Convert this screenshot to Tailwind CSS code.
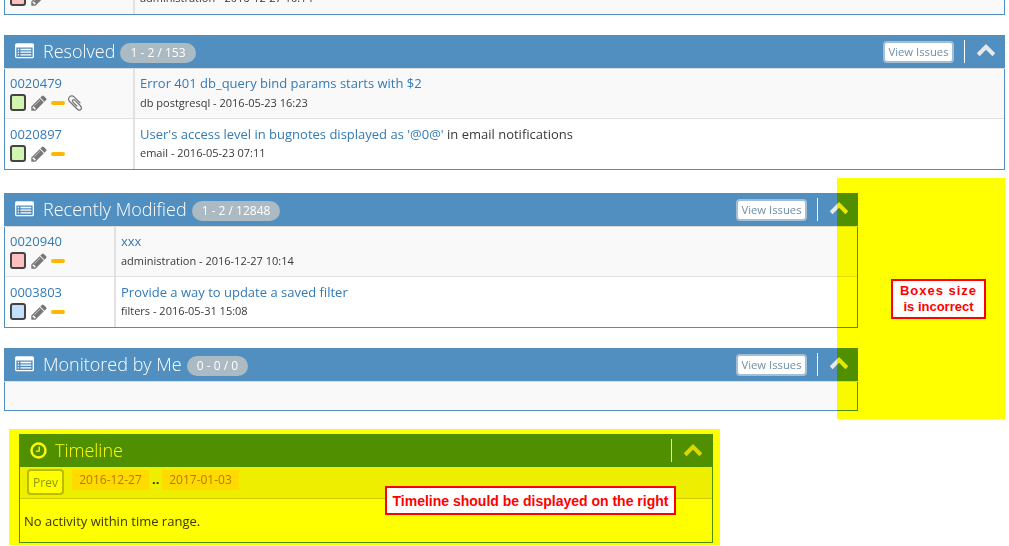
<!DOCTYPE html>
<html lang="en">
<head>
  <meta charset="UTF-8">
  <title>My View</title>
  <meta name="viewport" content="width=device-width, initial-scale=1">
  <script src="https://cdn.jsdelivr.net/npm/@tailwindcss/browser@4"></script>
</head>
<body class="relative h-[546px] overflow-hidden bg-white font-['Open_Sans',sans-serif] text-[13px] text-[#393939]">

  <!-- FontAwesome style icons -->
  <svg class="hidden">
    <symbol id="i-list" viewBox="0 0 1792 1792"><path d="M384 1184v64q0 13-9.5 22.5t-22.5 9.5h-64q-13 0-22.5-9.5t-9.5-22.5v-64q0-13 9.5-22.5t22.5-9.5h64q13 0 22.5 9.5t9.5 22.5zm0-256v64q0 13-9.5 22.5t-22.5 9.5h-64q-13 0-22.5-9.5t-9.5-22.5v-64q0-13 9.5-22.5t22.5-9.5h64q13 0 22.5 9.5t9.5 22.5zm0-256v64q0 13-9.5 22.5t-22.5 9.5h-64q-13 0-22.5-9.5t-9.5-22.5v-64q0-13 9.5-22.5t22.5-9.5h64q13 0 22.5 9.5t9.5 22.5zm1152 512v64q0 13-9.5 22.5t-22.5 9.5h-960q-13 0-22.5-9.5t-9.5-22.5v-64q0-13 9.5-22.5t22.5-9.5h960q13 0 22.5 9.5t9.5 22.5zm0-256v64q0 13-9.5 22.5t-22.5 9.5h-960q-13 0-22.5-9.5t-9.5-22.5v-64q0-13 9.5-22.5t22.5-9.5h960q13 0 22.5 9.5t9.5 22.5zm0-256v64q0 13-9.5 22.5t-22.5 9.5h-960q-13 0-22.5-9.5t-9.5-22.5v-64q0-13 9.5-22.5t22.5-9.5h960q13 0 22.5 9.5t9.5 22.5zm128 704v-832q0-13-9.5-22.5t-22.5-9.5h-1472q-13 0-22.5 9.5t-9.5 22.5v832q0 13 9.5 22.5t22.5 9.5h1472q13 0 22.5-9.5t9.5-22.5zm128-1088v1088q0 66-47 113t-113 47h-1472q-66 0-113-47t-47-113v-1088q0-66 47-113t113-47h1472q66 0 113 47t47 113z"/></symbol>
    <symbol id="i-pencil" viewBox="0 0 1792 1792"><path d="M491 1536l91-91-235-235-91 91v107h128v128h107zm523-928q0-22-22-22-10 0-17 7l-542 542q-7 7-7 17 0 22 22 22 10 0 17-7l542-542q7-7 7-17zm-54-192l416 416-832 832h-416v-416zm683 96q0 53-37 90l-166 166-416-416 166-165q36-38 90-38 53 0 91 38l235 234q37 39 37 91z"/></symbol>
    <symbol id="i-clip" viewBox="0 0 1792 1792"><path d="M1596 1385q0 117-79 196t-196 79q-135 0-235-100l-777-776q-113-115-113-271 0-159 110-270t269-111q158 0 273 113l605 606q10 10 10 22 0 16-30.5 46.5t-46.5 30.5q-13 0-23-10l-606-607q-79-77-181-77-106 0-179 75t-73 181q0 105 76 181l776 777q63 63 145 63 64 0 106-42t42-106q0-82-63-145l-581-581q-26-24-60-24-29 0-48 19t-19 48q0 32 25 59l410 410q10 10 10 22 0 16-31 47t-47 31q-12 0-22-10l-410-410q-63-61-63-149 0-82 57-139t139-57q88 0 149 63l581 581q100 98 100 235z"/></symbol>
    <symbol id="i-chevron" viewBox="0 0 1792 1792"><path d="M1683 1331l-166 165q-19 19-45 19t-45-19l-531-531-531 531q-19 19-45 19t-45-19l-166-165q-19-19-19-45.5t19-45.5l742-741q19-19 45-19t45 19l742 741q19 19 19 45.5t-19 45.5z"/></symbol>
    <symbol id="i-clock" viewBox="0 0 1792 1792"><path d="M1024 544v448q0 14-9 23t-23 9h-320q-14 0-23-9t-9-23v-64q0-14 9-23t23-9h224v-352q0-14 9-23t23-9h64q14 0 23 9t9 23zm416 352q0-148-73-273t-198-198-273-73-273 73-198 198-73 273 73 273 198 198 273 73 273-73 198-198 73-273zm224 0q0 209-103 385.5t-279.5 279.5-385.5 103-385.5-103-279.5-279.5-103-385.5 103-385.5 279.5-279.5 385.5-103 385.5 103 279.5 279.5 103 385.5z"/></symbol>
  </svg>

  <main class="flex flex-col items-start pl-1">

    <!-- Assigned box, scrolled off the top -->
    <section class="flex h-[15px] w-[1001px] flex-col justify-end overflow-hidden border-x border-b border-[#508fc0]">
      <div class="flex h-[50px] shrink-0 bg-[#f9f9f9]">
        <div class="w-[130px] shrink-0 border-r-2 border-[#e1e1e1] pl-[5px] pt-[5px]">
          <a class="block h-[20px] text-[#337ab7]">0020940</a>
          <div class="flex h-[17px] items-center">
            <span class="h-[17px] w-4 rounded-[3px] border-2 border-[#444] bg-[#ffc0c0]"></span>
            <svg class="ml-1 mr-[3px] h-[18px] w-[18px] fill-[#777]"><use href="#i-pencil"/></svg>
            <span class="h-1 w-[14px] rounded-sm bg-[#ffb800]"></span>
          </div>
        </div>
        <div class="pl-[5px] pt-[5px]">
          <a class="block h-[21px] text-[#337ab7]">xxx</a>
          <div class="text-[11px]">administration - 2016-12-27 10:14</div>
        </div>
      </div>
    </section>

    <!-- Resolved -->
    <section class="mt-5 w-[1001px] border-x border-b border-[#508fc0]">
      <header class="-mx-px flex h-[34px] items-center border-b border-[#ddd] bg-[#508fc0] pl-[11px] text-white">
        <svg class="h-[19px] w-[19px] fill-white"><use href="#i-list"/></svg>
        <h4 class="ml-[9px] text-[18px] font-light">Resolved</h4>
        <span class="ml-[5px] mt-[2px] flex h-5 items-center rounded-full bg-[#abbac3] px-[10px] text-[12px]">1 - 2 / 153</span>
        <a class="ml-auto flex h-[22px] w-[71px] items-center justify-center rounded-[4px] border-2 border-[#a3bfd6] bg-white pt-px text-[11.3px] text-[#6f8fa9]">View Issues</a>
        <span class="ml-[10px] h-[23px] w-px bg-white"></span>
        <svg class="mb-[6px] ml-[11px] mr-[9px] h-5 w-5 fill-[#e8e8e8]"><use href="#i-chevron"/></svg>
      </header>
      <div class="flex h-[49px] bg-[#f9f9f9]">
        <div class="w-[130px] shrink-0 border-r-2 border-[#e1e1e1] pl-[5px] pt-[5px]">
          <a class="block h-[20px] text-[#337ab7]">0020479</a>
          <div class="flex h-[17px] items-center">
            <span class="h-[17px] w-4 rounded-[3px] border-2 border-[#444] bg-[#d2f5b0]"></span>
            <svg class="ml-1 mr-[3px] h-[18px] w-[18px] fill-[#777]"><use href="#i-pencil"/></svg>
            <span class="h-1 w-[14px] rounded-sm bg-[#ffb800]"></span>
            <svg class="ml-px h-[18px] w-[18px] fill-[#777]"><use href="#i-clip"/></svg>
          </div>
        </div>
        <div class="pl-[5px] pt-[5px]">
          <a class="block h-[21px] text-[#337ab7]">Error 401 db_query bind params starts with $2</a>
          <div class="text-[11px]">db postgresql - 2016-05-23 16:23</div>
        </div>
      </div>
      <div class="flex h-[51px] border-t border-[#e1e1e1] bg-white">
        <div class="w-[130px] shrink-0 border-r-2 border-[#e1e1e1] pl-[5px] pt-[6px]">
          <a class="block h-[20px] text-[#337ab7]">0020897</a>
          <div class="flex h-[17px] items-center">
            <span class="h-[17px] w-4 rounded-[3px] border-2 border-[#444] bg-[#d2f5b0]"></span>
            <svg class="ml-1 mr-[3px] h-[18px] w-[18px] fill-[#777]"><use href="#i-pencil"/></svg>
            <span class="h-1 w-[14px] rounded-sm bg-[#ffb800]"></span>
          </div>
        </div>
        <div class="pl-[5px] pt-[6px]">
          <div class="h-[20px]"><a class="text-[#337ab7]">User's access level in bugnotes displayed as '@0@'</a> in email notifications</div>
          <div class="text-[11px]">email - 2016-05-23 07:11</div>
        </div>
      </div>
    </section>

    <!-- Recently Modified -->
    <section class="mt-[23px] w-[854px] border-x border-b border-[#508fc0]">
      <header class="-mx-px flex h-[34px] items-center border-b border-[#ddd] bg-[#508fc0] pl-[11px] text-white">
        <svg class="h-[19px] w-[19px] fill-white"><use href="#i-list"/></svg>
        <h4 class="ml-[9px] text-[18px] font-light">Recently Modified</h4>
        <span class="ml-[5px] mt-[2px] flex h-5 items-center rounded-full bg-[#abbac3] px-[10px] text-[12px]">1 - 2 / 12848</span>
        <a class="ml-auto flex h-[22px] w-[71px] items-center justify-center rounded-[4px] border-2 border-[#a3bfd6] bg-white pt-px text-[11.3px] text-[#6f8fa9]">View Issues</a>
        <span class="ml-[10px] h-[23px] w-px bg-white"></span>
        <svg class="mb-[6px] ml-[11px] mr-[9px] h-5 w-5 fill-[#e8e8e8]"><use href="#i-chevron"/></svg>
      </header>
      <div class="flex h-[49px] bg-[#f9f9f9]">
        <div class="w-[111px] shrink-0 border-r-2 border-[#e1e1e1] pl-[5px] pt-[5px]">
          <a class="block h-[20px] text-[#337ab7]">0020940</a>
          <div class="flex h-[17px] items-center">
            <span class="h-[17px] w-4 rounded-[3px] border-2 border-[#444] bg-[#ffc0c0]"></span>
            <svg class="ml-1 mr-[3px] h-[18px] w-[18px] fill-[#777]"><use href="#i-pencil"/></svg>
            <span class="h-1 w-[14px] rounded-sm bg-[#ffb800]"></span>
          </div>
        </div>
        <div class="pl-[5px] pt-[5px]">
          <a class="block h-[21px] text-[#337ab7]">xxx</a>
          <div class="text-[11px]">administration - 2016-12-27 10:14</div>
        </div>
      </div>
      <div class="flex h-[51px] border-t border-[#e1e1e1] bg-white">
        <div class="w-[111px] shrink-0 border-r-2 border-[#e1e1e1] pl-[5px] pt-[6px]">
          <a class="block h-[20px] text-[#337ab7]">0003803</a>
          <div class="flex h-[17px] items-center">
            <span class="h-[17px] w-4 rounded-[3px] border-2 border-[#444] bg-[#c2dfff]"></span>
            <svg class="ml-1 mr-[3px] h-[18px] w-[18px] fill-[#777]"><use href="#i-pencil"/></svg>
            <span class="h-1 w-[14px] rounded-sm bg-[#ffb800]"></span>
          </div>
        </div>
        <div class="pl-[5px] pt-[6px]">
          <a class="block h-[20px] text-[#337ab7]">Provide a way to update a saved filter</a>
          <div class="text-[11px]">filters - 2016-05-31 15:08</div>
        </div>
      </div>
    </section>

    <!-- Monitored by Me -->
    <section class="mt-5 w-[854px] border-x border-b border-[#508fc0]">
      <header class="-mx-px flex h-[34px] items-center border-b border-[#ddd] bg-[#508fc0] pl-[11px] text-white">
        <svg class="h-[19px] w-[19px] fill-white"><use href="#i-list"/></svg>
        <h4 class="ml-[9px] text-[18px] font-light">Monitored by Me</h4>
        <span class="ml-[5px] mt-[2px] flex h-5 items-center rounded-full bg-[#abbac3] px-[10px] text-[12px]">0 - 0 / 0</span>
        <a class="ml-auto flex h-[22px] w-[71px] items-center justify-center rounded-[4px] border-2 border-[#a3bfd6] bg-white pt-px text-[11.3px] text-[#6f8fa9]">View Issues</a>
        <span class="ml-[10px] h-[23px] w-px bg-white"></span>
        <svg class="mb-[6px] ml-[11px] mr-[9px] h-5 w-5 fill-[#e8e8e8]"><use href="#i-chevron"/></svg>
      </header>
      <div class="h-[28px] bg-[#f9f9f9]"></div>
    </section>

    <!-- Timeline -->
    <section class="ml-[15px] mt-[23px] w-[694px] border-x border-b border-[#508fc0]">
      <header class="-mx-px flex h-[33px] items-center bg-[#508fc0] pl-[10px] text-white">
        <svg class="h-[19px] w-[19px] fill-white"><use href="#i-clock"/></svg>
        <h4 class="ml-[7px] text-[18px] font-light">Timeline</h4>
        <span class="ml-auto h-[23px] w-px bg-white"></span>
        <svg class="mb-1 ml-[11px] mr-[10px] h-5 w-5 fill-[#d8d8d8]"><use href="#i-chevron"/></svg>
      </header>
      <div class="flex h-[32px] items-start gap-2 border-b border-[#ccc] bg-[#eeeeee] pl-[7px] pt-[2px]">
        <a class="flex h-[26px] w-[37px] items-center justify-center rounded-[4px] border-2 border-[#bbb] bg-white pt-px text-[12px] text-[#8a9aa9]">Prev</a>
        <div class="mt-px flex items-center gap-[3px]">
          <span class="flex h-5 w-[77px] items-center justify-center bg-[#ffdb40] text-[12px] text-[#b07a00]">2016-12-27</span>
          <span class="w-[7px] font-bold">..</span>
          <span class="flex h-5 w-[77px] items-center justify-center bg-[#ffdb40] text-[12px] text-[#b07a00]">2017-01-03</span>
        </div>
      </div>
      <p class="flex h-[43px] items-center bg-white pl-1 pt-[3px]">No activity within time range.</p>
    </section>
  </main>

  <!-- Highlight marks laid over the screenshot -->
  <div class="absolute left-[837px] top-[178px] h-[241px] w-[168px] bg-[#ffff00] mix-blend-multiply"></div>
  <div class="absolute left-[9px] top-[429px] h-[116px] w-[711px] bg-[#ffff00] mix-blend-multiply"></div>
  <div class="absolute left-[891px] top-[279px] flex h-10 w-[95px] items-center justify-center border-2 border-[#ff0000] bg-white text-center font-['Liberation_Sans',sans-serif] text-[13px] font-bold leading-4 text-[#ff0000]"><span><span class="tracking-[1px]">Boxes size</span><br>is incorrect</span></div>
  <div class="absolute left-[385px] top-[486px] flex h-[29px] w-[291px] items-center justify-center border-2 border-[#ff0000] bg-white pt-px font-['Liberation_Sans',sans-serif] text-[14px] font-bold text-[#ff0000]">Timeline should be displayed on the right</div>

</body>
</html>
